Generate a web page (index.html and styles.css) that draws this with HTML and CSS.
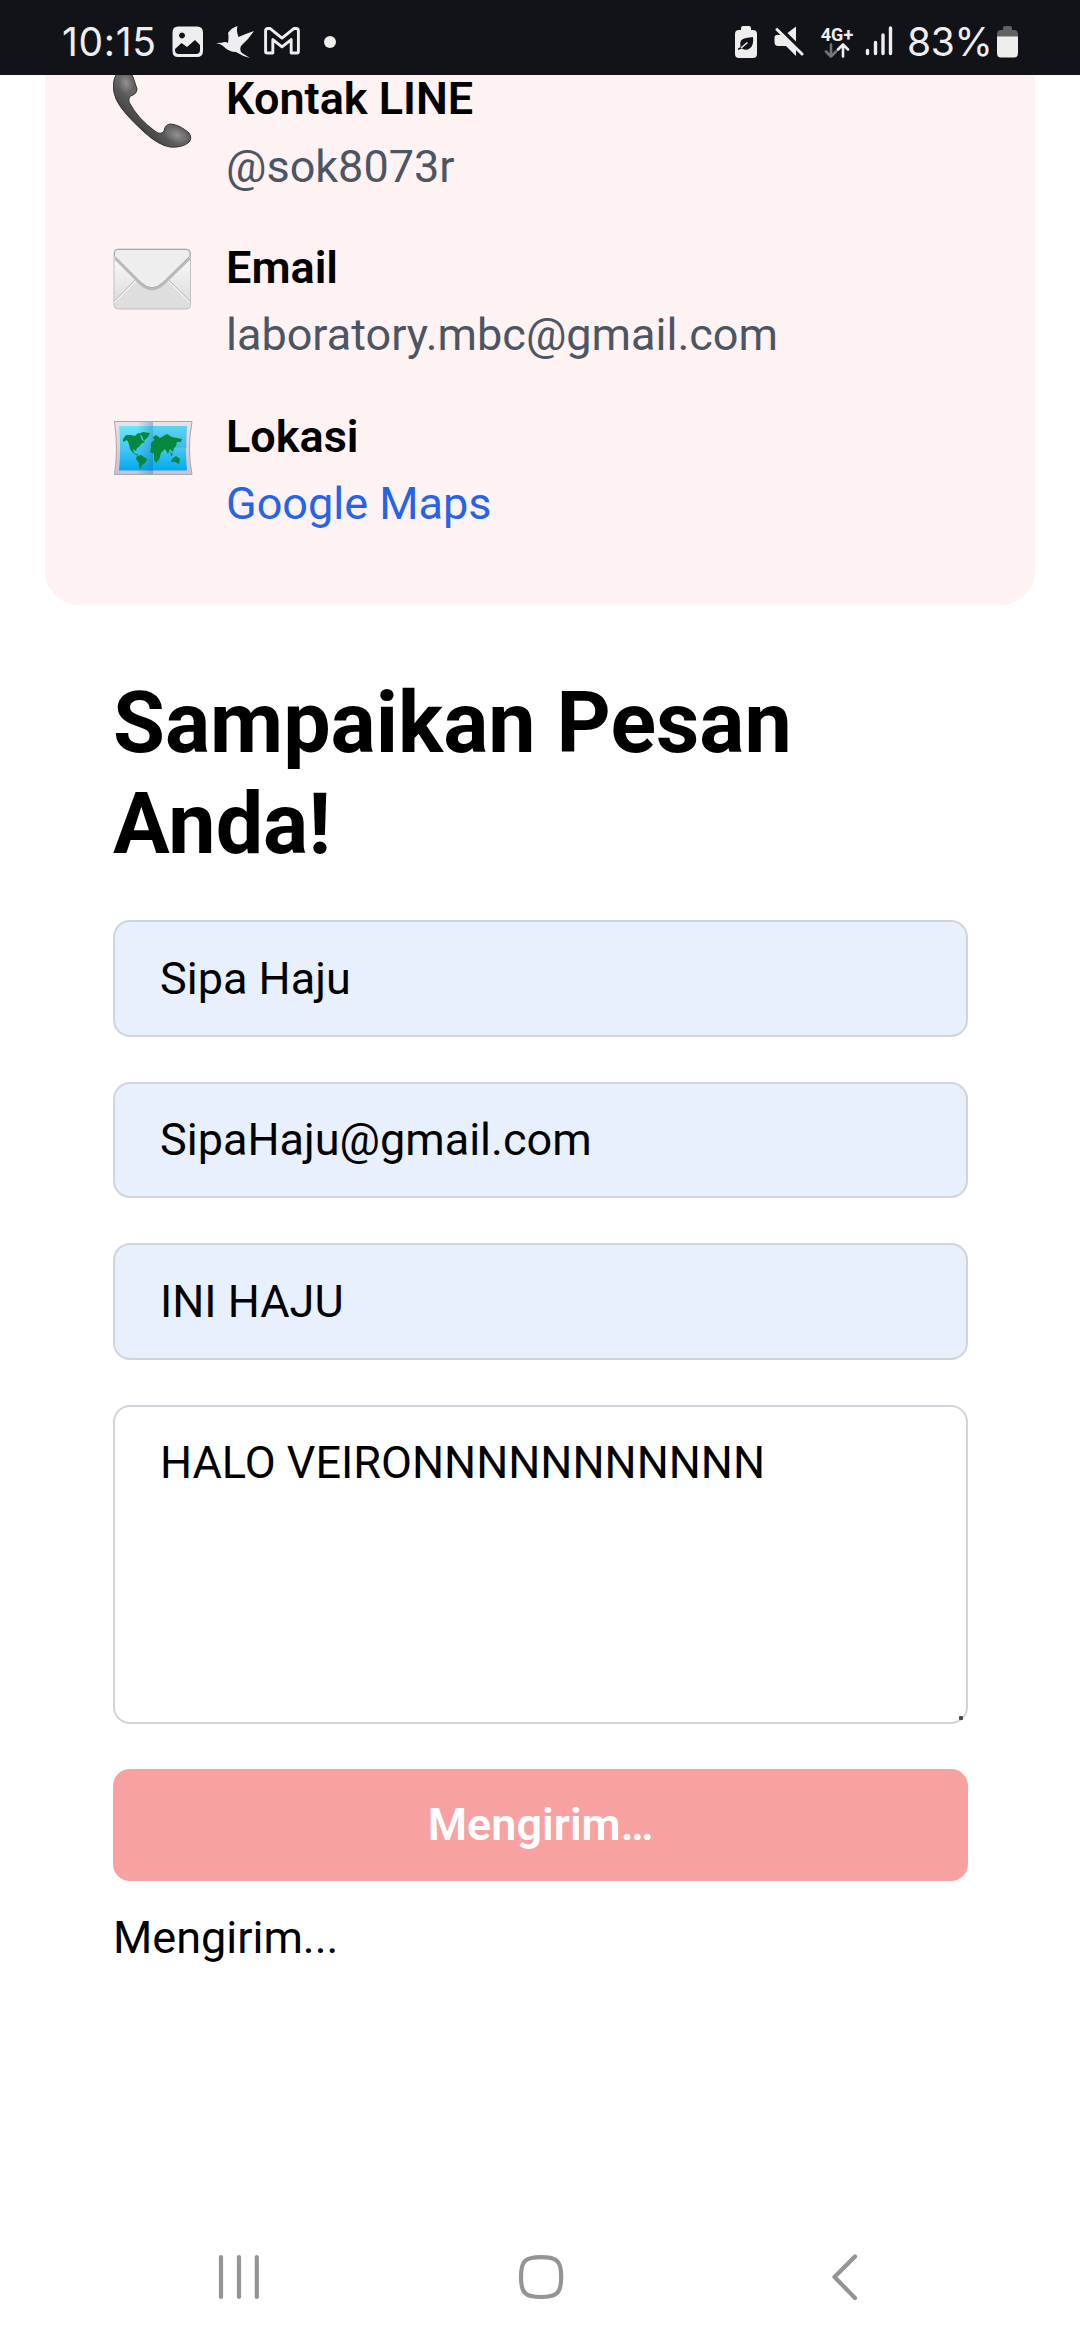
FILE: index.html
```html
<!DOCTYPE html>
<html lang="id">
<head>
<meta charset="utf-8">
<title>Kontak</title>
<link rel="stylesheet" href="styles.css">
</head>
<body>
<div class="screen">
  <header class="status">
    <div class="status-left">
      <span class="clock">10:15</span>
      <svg class="ic-photo" width="32" height="32" viewBox="0 0 32 32"><path fill="#eee" fill-rule="evenodd" d="M6 0.5H25Q31 0.5 31 6.500V25Q31 31 25 31H6Q0.500 31 0.500 25V6.500Q0.500 0.500 6 0.500ZM10 6.500a3 3 0 1 0 .01 0ZM3 24Q3 28 7 28H24Q28 28 28 24V19L23 14L15 21L9.500 17L3 23Z"/></svg>
      <svg class="ic-bird" width="38" height="32" viewBox="0 0 38 32"><path fill="#eee" d="M0 17L6 16.800Q9 15 12 17Q13 10 12 7Q15 2 21.500 0Q20 5 22.500 11Q29 8 38 5Q32 14 25 20Q23 24 26 27L34 32Q26 30 20 26Q13 26 7 20Q5 18 0 17Z"/></svg>
      <svg class="ic-mail" width="36" height="28" viewBox="0 0 37 29"><path fill="none" stroke="#eee" stroke-width="3" stroke-linejoin="round" d="M1.500 4Q1.500 1.500 4 1.500H6L18.500 11.500L31 1.500H33Q35.500 1.500 35.500 4V25.500Q35.500 27 34 27H28V13L18.500 20.500L9 13V27H3Q1.500 27 1.500 25.500Z"/></svg>
      <span class="dot"></span>
    </div>
    <div class="status-right">
      <svg width="22" height="32" viewBox="0 0 22 32"><path fill="#eee" d="M6 2Q6 0 8 0H14Q16 0 16 2V4H18Q22 4 22 8V28Q22 32 18 32H4Q0 32 0 28V8Q0 4 4 4H6Z"/><path fill="#111318" d="M18 11Q19 20 14.500 22.500Q11 25 7 22.500L3 24V22.500L5.500 21Q3.500 13 11 12Z"/><path stroke="#eee" stroke-width="1.500" d="M6 22L12.500 16.500"/></svg>
      <svg class="ic-mute" width="30" height="31" viewBox="0 0 30 31"><path fill="#eee" d="M13.500 7L22 0.500V15.500ZM3 9H7L22 23V30L12 20H4Q0.500 20 0.500 16V12Q0.500 9 3 9Z"/><path stroke="#eee" stroke-width="3" stroke-linecap="round" d="M3 3.500L28 28"/></svg>
      <div class="net"><span>4G+</span>
        <svg width="26" height="15" viewBox="0 0 26 15" fill="none" stroke-width="2.600" stroke-linecap="round" stroke-linejoin="round"><path stroke="#73757a" d="M7 1.500V13M2 8.500L7 13.500L12 8.500"/><path stroke="#eee" d="M19 13.500V2M14 6.500L19 1.500L24 6.500"/></svg>
      </div>
      <svg class="ic-signal" width="28" height="30" viewBox="0 0 28 30" stroke="#eee" stroke-width="3.400" stroke-linecap="round"><path d="M2.500 24.500V27.500M10.500 16.500V27.500M18 9V27.500M25.500 2V27.500"/></svg>
      <span class="pct">83%</span>
      <svg width="21" height="32" viewBox="0 0 21 32"><path fill="#606165" d="M6 2Q6 0 8 0H13Q15 0 15 2V4H17Q21 4 21 8V11H0V8Q0 4 4 4H6Z"/><path fill="#eee" d="M0 10.500H21V27Q21 31.500 17 31.500H4Q0 31.500 0 27Z"/></svg>
    </div>
  </header>

  <main class="page">
    <section class="card">
      <div class="item">
        <svg class="emoji" width="80" height="90" viewBox="0 0 80 90">
          <defs>
            <linearGradient id="ph" x1="0" y1="1" x2="1" y2="0"><stop offset=".25" stop-color="#3a3a3a"/><stop offset=".48" stop-color="#686868"/><stop offset=".7" stop-color="#505050"/></linearGradient>
            <radialGradient id="cup"><stop offset="0" stop-color="#929292"/><stop offset="1" stop-color="#606060"/></radialGradient>
          </defs>
          <path fill="url(#ph)" stroke="#333" d="M7 6Q16 2 20 12L24 24Q24 28 20 30Q15 31 16 37Q24 53 43 67Q48 70 51 66Q52 59 58 59Q67 60 76 68Q80 74 75 78Q68 83 57 82Q45 80 31 67Q8 46 3 34Q-3 19 4 8Z"/>
          <ellipse cx="13" cy="18" rx="8" ry="11" transform="rotate(-18 13 18)" fill="url(#cup)"/>
          <ellipse cx="64" cy="70" rx="13" ry="8" transform="rotate(25 64 70)" fill="url(#cup)"/>
        </svg>
        <div><h3>Kontak LINE</h3><p>@sok8073r</p></div>
      </div>
      <div class="item">
        <svg class="emoji" width="80" height="90" viewBox="0 0 80 90">
          <defs><linearGradient id="env" x1="0" y1="0" x2="0" y2="1"><stop offset="0" stop-color="#fff"/><stop offset="1" stop-color="#d8d8d8"/></linearGradient></defs>
          <rect x="1" y="15" width="76.500" height="60" rx="4" fill="url(#env)" stroke="#c5bfc0"/>
          <path fill="#dedede" d="M2 68L23 45H55L77 68V71Q77 74 73 74H5Q2 74 2 71Z"/>
          <path fill="none" stroke="#bbb" d="M1.500 67L22 46M77 67L56 46"/><path fill="none" stroke="#fff" d="M1.500 68.500L23 47M77 68.500L55 47"/>
          <path fill="none" stroke="#bbb" stroke-width="3" d="M2 24L28 50Q39 60 50 50L77 24"/>
          <path fill="#eee" stroke="#999" stroke-width=".8" d="M1.500 22V18Q2 15.500 5 15.500H73Q77 15.500 77 19V22L50 48.500Q39 59 28 48.500Z"/>
        </svg>
        <div><h3>Email</h3><p>laboratory.mbc@gmail.com</p></div>
      </div>
      <div class="item">
        <svg class="emoji" width="80" height="90" viewBox="0 0 80 90">
          <defs><linearGradient id="sea" x1="0" y1="0" x2="0" y2="1"><stop offset="0" stop-color="#69e6ff"/><stop offset=".5" stop-color="#45c8f3"/><stop offset="1" stop-color="#00aaf1"/></linearGradient>
          <linearGradient id="frame" x1="0" y1="0" x2="0" y2="1"><stop offset="0" stop-color="#e8e4e7"/><stop offset="1" stop-color="#c9c1d0"/></linearGradient>
          <linearGradient id="fold"><stop offset="0" stop-color="#0a67a5" stop-opacity="0"/><stop offset="1" stop-color="#0a67a5" stop-opacity=".35"/></linearGradient></defs>
          <path fill="url(#frame)" stroke="#aaa4ad" d="M1.500 18.500H79L77 33Q76 45 77 58L79 71.500H1.500L3 58Q4 45 3 33Z"/>
          <path fill="url(#sea)" d="M6 23H74Q72 45 74 67.500H6Q8 45 6 23Z"/>
          <path fill="url(#fold)" d="M24 19H40V71H24Z"/>
          <path fill="#0a67a5" opacity=".14" d="M40 23H74V45H40Z"/>
          <path fill="#06893d" d="M10 36L13 32L18 32L22 33L25 30L27 32L29 37L32 39L28 41L26 44L24 45L23 48L20 46L21 50L24 51L25 53L20 50L17 46L16 41L14 37L10 39ZM24 53L28 52L34 56L32 60L29 62L28 66L26 65L26 60L23 56ZM25 31L30 29L37 30L35 34L31 38L29 33ZM38 44L38 40L41 37L40 34L43 32L47 35L54 31L59 34L69 36L68 39L64 39L63 43L61 45L60 49L57 46L55 51L52 46L50 48L48 50L46 57L43 60L41 57L41 51L37 49ZM57 48L60 52L58 53ZM59 56L63 53L67 56L66 61L62 59H58Z"/>
        </svg>
        <div><h3>Lokasi</h3><p><a class="link">Google Maps</a></p></div>
      </div>
    </section>

    <form class="form">
      <h2>Sampaikan Pesan Anda!</h2>
      <div class="field">Sipa Haju</div>
      <div class="field">SipaHaju@gmail.com</div>
      <div class="field">INI HAJU</div>
      <div class="field area">HALO VEIRONNNNNNNNNNN<span class="grip"></span></div>
      <button class="send" type="button">Mengirim…</button>
      <p class="note">Mengirim...</p>
    </form>
  </main>

  <nav class="nav">
    <svg width="700" height="60" viewBox="0 0 700 60" fill="none" stroke="#949494" stroke-width="4.200" stroke-linecap="round" stroke-linejoin="round">
      <path d="M31 11V51M49 11V51M66.800 11V51"/>
      <path d="M351 11.200C367 11.200 371.200 15 371.200 31S367 51 351 51S331 47 331 31S335 11.200 351 11.200Z"/>
      <path d="M665 10.500L644.500 31L665 52"/>
    </svg>
  </nav>
</div>
</body>
</html>
```

FILE: styles.css
```css
* { box-sizing: border-box; }
body, h2, h3, p { margin: 0; }
body { background: #fff; font: 45px/67.5px Roboto, sans-serif; color: #000; }
.screen { width: 1080px; height: 2340px; display: flex; flex-direction: column; overflow: hidden; }
.status { height: 75px; flex: none; background: #111318; color: #eee; display: flex; justify-content: space-between; padding: 8px 62px 0 62px; z-index: 1; }
.status-left, .status-right { display: flex; align-items: center; }
.clock, .pct { font: 400 39px/66px Inter, sans-serif; white-space: nowrap; }
.clock { width: 110px; letter-spacing: 0.7px; }
.ic-bird { margin-left: 12px; }
.ic-mail { margin-left: 10px; margin-top: -2px; }
.dot { width: 12px; height: 12px; border-radius: 50%; background: #eee; margin-left: 24px; }
.ic-mute { margin-left: 17px; }
.net { width: 36px; margin-left: 15px; display: flex; flex-direction: column; align-items: center; font: 700 18px/17px Roboto, sans-serif; }
.ic-signal { margin-left: 10px; margin-top: -2px; }
.pct { width: 83px; margin: 0 7px 0 14px; letter-spacing: -0.3px; }
.page { flex: 1; min-height: 0; overflow: hidden; }
.card { margin: -77.4px 45px 0; padding: 67.5px; border-radius: 33.75px; background: #fef2f2; display: flex; flex-direction: column; gap: 33.75px; }
.item { display: flex; gap: 33.5px; height: 135px; }
.emoji { flex: none; }
h3 { font-size: 45px; line-height: 67.5px; font-weight: 600; }
.item p { color: #4b5563; }
.item .link { color: #2563eb; }
.form { padding: 67.5px 112px 0 113px; display: flex; flex-direction: column; gap: 45px; }
h2 { font-size: 84.375px; line-height: 101.25px; font-weight: 700; }
.field { border: 2px solid #d1d5db; border-radius: 17px; background: #e8effd; padding: 22.5px 45px; height: 116.5px; }
.area { position: relative; height: 319px; background: #fff; }
.grip { position: absolute; right: 3px; bottom: 2px; width: 4px; height: 4px; border-radius: 1px; background: #4b4b4f; }
.send { border: 0; border-radius: 17px; height: 112.5px; background: #f7a1a0; color: #fff; font: 600 45px/67.5px Roboto, sans-serif; padding: 0; }
.note { margin-top: -22.5px; }
.nav { height: 126px; flex: none; padding: 32px 190px 0; }
.nav svg { display: block; }
```
